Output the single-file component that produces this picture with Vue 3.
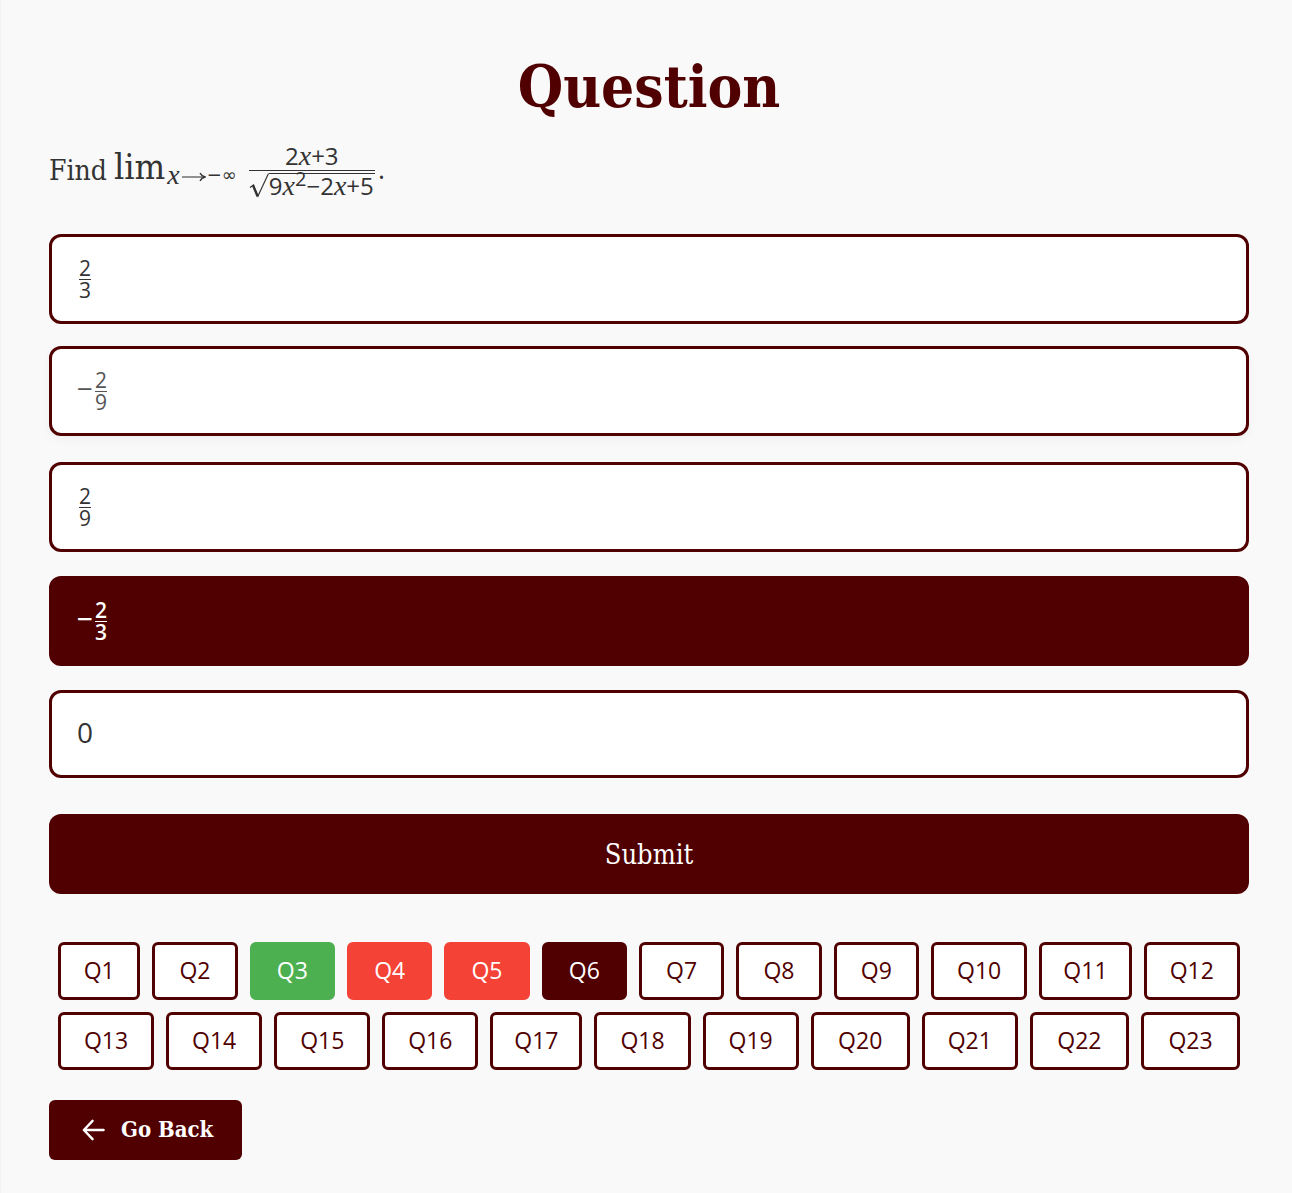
<script setup>
import { ref } from 'vue'

const options = [
  { id: 'a', num: '2', den: '3' },
  { id: 'b', sign: '−', num: '2', den: '9' },
  { id: 'c', num: '2', den: '9' },
  { id: 'd', sign: '−', num: '2', den: '3' },
  { id: 'e', text: '0' },
]
const selected = ref('d')
const hovered = ref('b')

const status = { 3: 'correct', 4: 'wrong', 5: 'wrong', 6: 'current' }
const questions = Array.from({ length: 23 }, (_, i) => i + 1)
const widthClass = (n) => {
  if (n === 1) return 'w-one'
  if (n < 10) return 'w-single'
  if (n === 11 || n === 17) return 'w-narrow'
  if (n >= 20 && n !== 21) return 'w-wide'
  return 'w-double'
}
</script>

<template>
  <main class="page">
    <h1 class="title">Question</h1>

    <div class="prompt">
      <span class="find">Find</span>
      <span class="lim">lim</span>
      <span class="limit-sub">
        <i>x</i>
        <svg class="arrow" viewBox="0 0 24 10" aria-hidden="true">
          <path d="M0 5H22" stroke="#777" stroke-width="1.6" fill="none" />
          <path d="M18 1.2Q19.6 4 23 5Q19.6 6 18 8.8" stroke="#333" stroke-width="1.4" fill="none" />
        </svg>
        <span>−∞</span>
      </span>
      <span class="big-frac">
        <span class="big-num">2<i>x</i>+3</span>
        <span class="root">
          <svg class="radical" viewBox="0 0 20 26" aria-hidden="true">
            <path d="M1 14.5L4.5 12L9 23L19.5 0.5" stroke="#333" stroke-width="1.2" fill="none" />
            <path d="M4 12.5L8.6 23.5" stroke="#333" stroke-width="2.2" />
          </svg>
          <span class="radicand">9<i>x</i><sup>2</sup>−2<i>x</i>+5</span>
        </span>
      </span>
      <span class="period">.</span>
    </div>

    <div class="options">
      <button
        v-for="o in options"
        :key="o.id"
        type="button"
        class="option"
        :class="{ selected: selected === o.id, lifted: hovered === o.id }"
        :aria-pressed="selected === o.id"
        @click="selected = o.id"
      >
        <span v-if="o.text" class="plain">{{ o.text }}</span>
        <template v-else>
          <span v-if="o.sign" class="sign">{{ o.sign }}</span>
          <span class="frac">
            <span class="num">{{ o.num }}</span>
            <span class="den">{{ o.den }}</span>
          </span>
        </template>
      </button>
    </div>

    <button type="button" class="submit">Submit</button>

    <nav class="questions" aria-label="Questions">
      <button v-for="n in questions" :key="n" type="button" class="q" :class="[widthClass(n), status[n]]">Q{{ n }}</button>
    </nav>

    <button type="button" class="back">
      <svg class="back-icon" viewBox="0 0 24 24" aria-hidden="true">
        <path d="M23 12H1.5M11 2L1.5 12L11 22" fill="none" stroke="#fff" stroke-width="2.6" stroke-linecap="round" stroke-linejoin="round" />
      </svg>
      <span class="back-label">Go Back</span>
    </button>
  </main>
</template>

<style>
body {
  margin: 0;
  background: #f9f9f9;
}
</style>

<style scoped>
.page {
  box-sizing: border-box;
  min-height: 100vh;
  padding: 48px 43px 33px 48px;
  border-left: 1px solid #f2f2f2;
  color: #333;
  font-family: "DejaVu Serif Condensed", "DejaVu Serif", serif;
}
button {
  box-sizing: border-box;
  margin: 0;
  font-family: inherit;
  cursor: pointer;
}
.title {
  margin: 0;
  color: #500000;
  font-size: 58px;
  line-height: 78px;
  font-weight: 700;
  text-align: center;
}
.prompt {
  display: flex;
  align-items: center;
  height: 64px;
  margin: 14px 0 30px;
}
.prompt i {
  font-family: "Liberation Serif", serif;
  font-size: 28px;
}
.find {
  padding-bottom: 4px;
  font-size: 28px;
  margin-right: 7px;
}
.lim {
  font-size: 36px;
  line-height: 40px;
  margin-bottom: 10px;
}
.limit-sub {
  display: flex;
  align-items: center;
  margin-top: 6px;
  margin-left: 2px;
  line-height: 24px;
}
.limit-sub span {
  font-family: "DejaVu Sans", sans-serif;
  font-size: 18px;
}
.arrow {
  width: 24px;
  height: 10px;
  margin: 4px 1px 0 2px;
}
.big-frac {
  display: flex;
  flex-direction: column;
  align-items: center;
  margin-left: 12px;
  font-family: "Open Sans", sans-serif;
  font-size: 24px;
  line-height: 24px;
}
.big-num {
  align-self: stretch;
  height: 26px;
  border-bottom: 1px solid #333;
  text-align: center;
}
.root {
  display: flex;
  height: 28px;
  padding-top: 2px;
}
.radical {
  width: 20px;
  height: 26px;
}
.radicand {
  padding-right: 1px;
  border-top: 1px solid #333;
}
.radicand sup {
  font-size: 20px;
  line-height: 1px;
}
.period {
  padding-bottom: 4px;
  margin-left: 3px;
  font-size: 26px;
}
.options {
  display: flex;
  flex-direction: column;
  gap: 24px;
}
.option {
  display: flex;
  align-items: center;
  width: 100%;
  padding: 22px 25px;
  border: 3px solid #500000;
  border-radius: 12px;
  background: #fff;
  color: #333;
  font-family: "Open Sans", sans-serif;
  font-size: 21px;
}
.lifted {
  transform: translateY(-2px);
  box-shadow: 0 4px 8px rgba(0, 0, 0, 0.04);
  color: #555;
}
.selected {
  background: #500000;
  color: #fff;
  font-weight: 600;
}
.plain {
  padding-bottom: 4px;
  font-size: 28px;
  line-height: 34px;
}
.sign {
  width: 16px;
  padding-bottom: 6px;
  font-size: 28px;
  line-height: 34px;
}
.frac {
  display: flex;
  flex-direction: column;
  margin-left: 2px;
  line-height: 18px;
}
.num {
  padding-bottom: 2px;
}
.den {
  padding-top: 1px;
  border-top: 1px solid currentColor;
}
.submit {
  width: 100%;
  height: 80px;
  margin-top: 36px;
  border: 0;
  border-radius: 12px;
  background: #500000;
  color: #fff;
  font-size: 27px;
}
.questions {
  display: flex;
  flex-wrap: wrap;
  gap: 12px;
  margin-top: 48px;
  padding: 0 9px;
}
.q {
  flex: 1 1 auto;
  height: 58px;
  padding: 0 0 2px;
  border: 3px solid #500000;
  border-radius: 6px;
  background: #fff;
  color: #500000;
  font-family: "Open Sans", sans-serif;
  font-size: 23px;
  font-weight: 400;
}
.w-one {
  width: 82px;
}
.w-single {
  width: 85px;
}
.w-narrow {
  width: 92px;
}
.w-double {
  width: 96px;
}
.w-wide {
  width: 99px;
}
.correct {
  border-color: #4caf50;
  background: #4caf50;
  color: #fff;
}
.wrong {
  border-color: #f44336;
  background: #f44336;
  color: #fff;
}
.current {
  background: #500000;
  color: #fff;
}
.back {
  display: flex;
  align-items: center;
  gap: 15px;
  height: 60px;
  margin-top: 30px;
  padding: 0 29px 0 32px;
  border: 0;
  border-radius: 6px;
  background: #500000;
  color: #fff;
  font-size: 22px;
  font-weight: 700;
}
.back-icon {
  width: 25px;
  height: 22px;
}
.back-label {
  padding-bottom: 3px;
}
</style>
